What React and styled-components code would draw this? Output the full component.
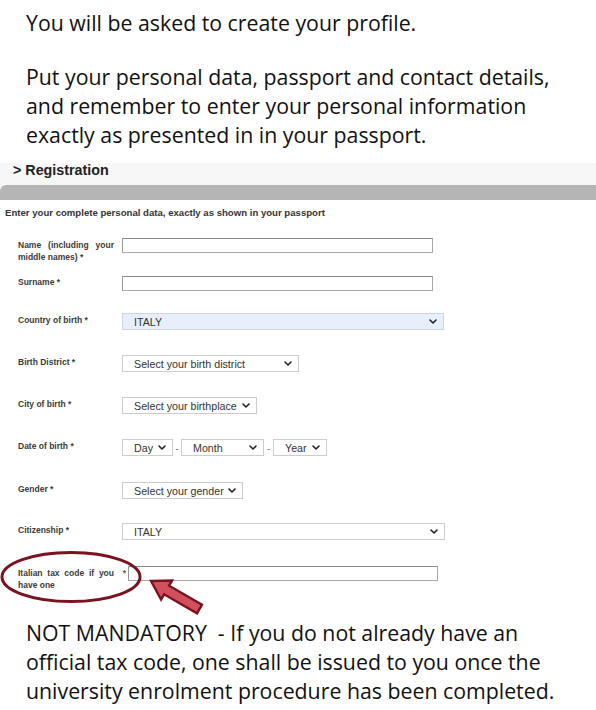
import React from "react";
import styled, { createGlobalStyle } from "styled-components";

const Global = createGlobalStyle`
  html, body { margin: 0; padding: 0; background: #fff; }
  body { width: 596px; height: 710px; overflow: hidden; }
  * { box-sizing: border-box; }
`;

const Page = styled.div`
  width: 596px;
  height: 710px;
`;

const Slide = styled.div`
  padding: ${(p) => p.$pad || "0 0 0 26px"};
  font-family: "Open Sans", "Noto Sans", sans-serif;
  font-size: 21.3px;
  line-height: 29px;
  color: #111;
  white-space: nowrap;
`;

const Para = styled.p`
  margin: 0;
  & + & { margin-top: 25px; }
`;

const Header = styled.div`
  margin-top: 14px;
  background: #f7f7f7;
  height: 22px;
  padding-left: 13px;
  font-family: "Liberation Sans", Arial, sans-serif;
  font-weight: bold;
  font-size: 14.3px;
  line-height: 15px;
  color: #222;
`;

const GreyBar = styled.div`
  height: 15px;
  background: #b5b5b5;
  border-top-left-radius: 6px;
`;

const Intro = styled.div`
  padding: 7px 0 0 5px;
  height: 38px;
  font-family: "Liberation Sans", Arial, sans-serif;
  font-size: 9.6px;
  font-weight: bold;
  line-height: 12px;
  color: #333;
  white-space: nowrap;
`;

const Form = styled.div`
  font-family: "Liberation Sans", Arial, sans-serif;
`;

const Row = styled.div`
  position: relative;
  display: flex;
  align-items: flex-start;
  height: ${(p) => p.$h}px;
  padding-left: 18px;
`;

const Label = styled.div`
  width: ${(p) => p.$w || 104}px;
  flex-shrink: 0;
  padding-right: ${(p) => (p.$w ? 0 : 8)}px;
  padding-top: ${(p) => p.$pt ?? 1}px;
  font-size: 8.5px;
  font-weight: bold;
  line-height: 12px;
  color: #3a3a3a;
  text-align: justify;
`;

const Star = styled.span`
  width: 14px;
  flex-shrink: 0;
  padding-right: 2px;
  padding-top: 2px;
  text-align: right;
  font-size: 8.5px;
  font-weight: bold;
  color: #555;
`;

const TextInput = styled.div`
  width: ${(p) => p.$w}px;
  height: 15px;
  border: 1px solid #a8a8a8;
  border-top-color: #8a8a8a;
  border-left-color: #999;
  background: #fff;
`;

const SelectBox = styled.div`
  width: ${(p) => p.$w}px;
  height: 17px;
  border: 1px solid ${(p) => (p.$filled ? "#cfd6e2" : "#cdcdcd")};
  background: ${(p) => (p.$filled ? "#e8effc" : "#fff")};
  display: flex;
  align-items: center;
  justify-content: space-between;
  padding: 0 6px 0 ${(p) => p.$pl || 11}px;
  font-size: 10.7px;
  color: #333;
  white-space: nowrap;
`;

const Chevron = () => (
  <svg width="8" height="5" viewBox="0 0 8 5" style={{ flexShrink: 0 }}>
    <path d="M1 1 L4 4 L7 1" fill="none" stroke="#222" strokeWidth="1.6" strokeLinecap="round" strokeLinejoin="round" />
  </svg>
);

const Select = ({ w, filled, pl, children }) => (
  <SelectBox $w={w} $filled={filled} $pl={pl}>
    <span>{children}</span>
    <Chevron />
  </SelectBox>
);

const DateGroup = styled.div`
  display: flex;
  align-items: center;
`;

const Dash = styled.span`
  width: ${(p) => p.$w}px;
  text-align: center;
  font-size: 9px;
  color: #555;
  padding-top: 3px;
`;

const Ellipse = styled.svg`
  position: absolute;
  left: 0;
  top: -16px;
`;

const Arrow = styled.svg`
  position: absolute;
  left: 146px;
  top: 9px;
`;

export default function App() {
  return (
    <Page>
      <Global />
      <Slide $pad="8px 0 0 26px">
        <Para>You will be asked to create your profile.</Para>
        <Para>
          Put your personal data, passport and contact details,
          <br />
          and remember to enter your personal information
          <br />
          exactly as presented in in your passport.
        </Para>
      </Slide>
      <Header>&gt; Registration</Header>
      <GreyBar />
      <Intro>Enter your complete personal data, exactly as shown in your passport</Intro>
      <Form>
        <Row $h={38}>
          <Label>Name (including your middle names) *</Label>
          <TextInput $w={311} />
        </Row>
        <Row $h={37}>
          <Label $pt={0}>Surname *</Label>
          <TextInput $w={311} />
        </Row>
        <Row $h={42}>
          <Label>Country of birth *</Label>
          <Select w={322} filled>ITALY</Select>
        </Row>
        <Row $h={42}>
          <Label>Birth District *</Label>
          <Select w={177}>Select your birth district</Select>
        </Row>
        <Row $h={42}>
          <Label>City of birth *</Label>
          <Select w={135}>Select your birthplace</Select>
        </Row>
        <Row $h={43}>
          <Label>Date of birth *</Label>
          <DateGroup>
            <Select w={51}>Day</Select>
            <Dash $w={8}>-</Dash>
            <Select w={83}>Month</Select>
            <Dash $w={9}>-</Dash>
            <Select w={54}>Year</Select>
          </DateGroup>
        </Row>
        <Row $h={41}>
          <Label>Gender *</Label>
          <Select w={121}>Select your gender</Select>
        </Row>
        <Row $h={43}>
          <Label>Citizenship *</Label>
          <Select w={323}>ITALY</Select>
        </Row>
        <Row $h={52}>
          <Label $w={96} $pt={1}>Italian tax code if you have one</Label>
          <Star>*</Star>
          <TextInput $w={310} />
          <Ellipse width="146" height="56" viewBox="0 0 146 56">
            <ellipse cx="71" cy="27" rx="69" ry="24.5" fill="none" stroke="#7a1220" strokeWidth="3" />
          </Ellipse>
          <Arrow width="64" height="44" viewBox="0 0 64 44">
            <g transform="translate(5 6) rotate(30)">
              <path
                d="M0 0 L18 -11 L18 -5 L56 -5 L56 5 L18 5 L18 11 Z"
                fill="#d1505c"
                stroke="#7a1220"
                strokeWidth="2.4"
                strokeLinejoin="miter"
              />
            </g>
          </Arrow>
        </Row>
      </Form>
      <Slide $pad="0 0 0 26px">
        <Para>
          NOT MANDATORY&nbsp; - If you do not already have an
          <br />
          official tax code, one shall be issued to you once the
          <br />
          university enrolment procedure has been completed.
        </Para>
      </Slide>
    </Page>
  );
}
